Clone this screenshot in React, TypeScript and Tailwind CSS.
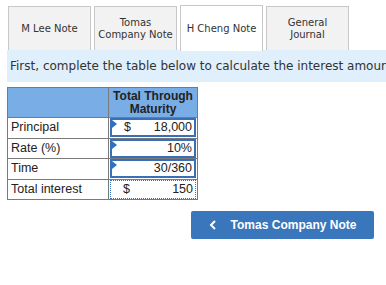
import React from 'react';

const tabs = [
  { label: 'M Lee Note', active: false },
  { label: 'Tomas Company Note', active: false },
  { label: 'H Cheng Note', active: true },
  { label: 'General Journal', active: false },
];

const rows = [
  { label: 'Principal', sign: '$', value: '18,000', input: true },
  { label: 'Rate (%)', sign: '', value: '10%', input: true },
  { label: 'Time', sign: '', value: '30/360', input: true },
  { label: 'Total interest', sign: '$', value: '150', input: false },
];

const Flag = () => (
  <span className="absolute left-0 top-0 w-0 h-0 border-t-[4px] border-b-[4px] border-l-[5px] border-t-transparent border-b-transparent border-l-[#2f6fc4]" />
);

export default function App() {
  return (
    <div className="w-[386px] h-[285px] bg-white overflow-hidden">
      <div className="flex gap-[3px] pl-[8px] pt-[6px] h-[50px] items-end font-['DejaVu_Sans',Verdana,sans-serif] text-[10px] leading-[12px] text-[#333]">
        {tabs.map((t) => (
          <div
            key={t.label}
            className={`w-[83px] flex items-center justify-center text-center whitespace-nowrap border border-[#c8c8c8] border-b-0 ${
              t.active ? 'bg-white h-[46px] border-[#a9a9a9] relative top-[1px]' : 'bg-[#f2f2f2] h-[44px]'
            }`}
          >
            {t.label === 'Tomas Company Note' ? (
              <span>Tomas<br />Company Note</span>
            ) : t.label === 'General Journal' ? (
              <span>General<br />Journal</span>
            ) : (
              t.label
            )}
          </div>
        ))}
      </div>

      <div className="ml-[7px] h-[32px] bg-[#dfeffb] flex items-center pl-[3px] whitespace-nowrap overflow-hidden font-['DejaVu_Sans',Verdana,sans-serif] text-[12px] text-[#333]">
        First, complete the table below to calculate the interest amount.
      </div>

      <table className="ml-[7px] mt-[5px] border-collapse font-['Liberation_Sans',Arial,sans-serif] text-[12.5px] text-[#222]">
        <thead>
          <tr className="h-[30px] bg-[#79ade5]">
            <th className="w-[101px] border border-[#7a7a7a]" />
            <th className="w-[89px] border border-[#7a7a7a] font-bold text-[12px] leading-[13px] text-[#222] text-center">
              Total Through
              <br />
              Maturity
            </th>
          </tr>
        </thead>
        <tbody>
          {rows.map((r) => (
            <tr key={r.label} className="h-[20.5px]">
              <td className="border border-[#7a7a7a] pl-[3px] text-left">{r.label}</td>
              <td className="border border-[#7a7a7a] p-0">
                <div
                  className={`relative h-[19px] mx-[1px] flex items-center justify-between pl-[12px] pr-[2px] ${
                    r.input ? 'border-2 border-[#3a6fb8]' : 'border border-dotted border-[#2f6fc4]'
                  }`}
                >
                  {r.input && <Flag />}
                  <span>{r.sign}</span>
                  <span>{r.value}</span>
                </div>
              </td>
            </tr>
          ))}
        </tbody>
      </table>

      <div className="flex justify-end pr-[12px] mt-[11px]">
        <button className="w-[183px] h-[28px] rounded-[2px] bg-[#3a76bb] text-white flex items-center justify-center gap-[14px] font-['Liberation_Sans',Arial,sans-serif] font-bold text-[12px]">
          <svg width="8" height="10" viewBox="0 0 8 10" fill="none">
            <path d="M6 1 L2 5 L6 9" stroke="white" strokeWidth="2" />
          </svg>
          <span>Tomas Company Note</span>
        </button>
      </div>
    </div>
  );
}
